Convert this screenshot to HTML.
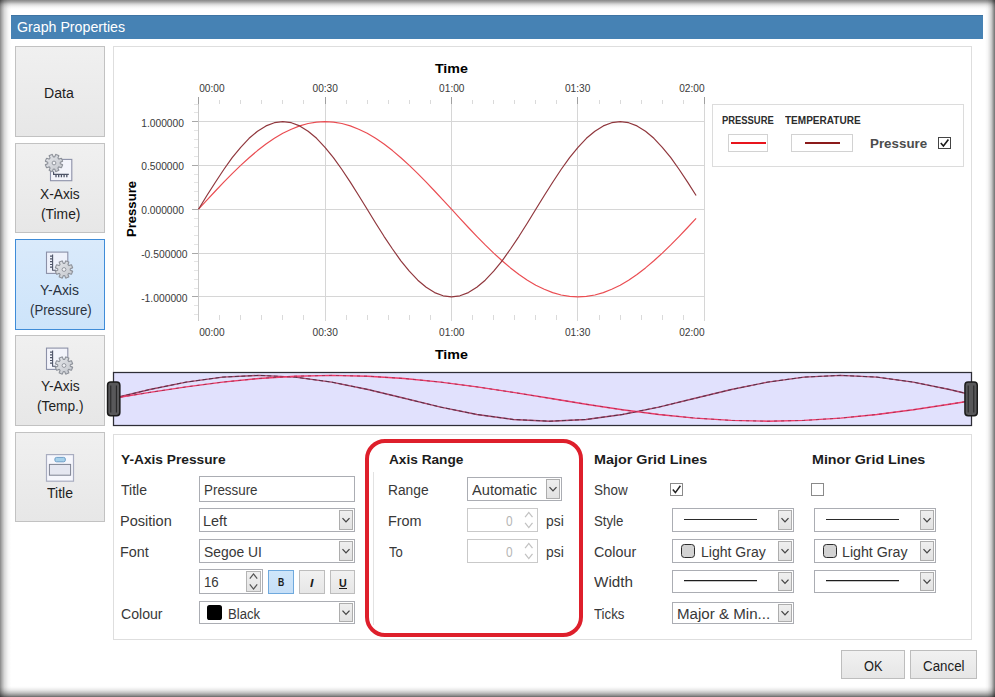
<!DOCTYPE html>
<html><head><meta charset="utf-8"><title>Graph Properties</title>
<style>
html,body{margin:0;padding:0;}
body{width:995px;height:697px;position:relative;overflow:hidden;background:#fff;font-family:"Liberation Sans",sans-serif;font-size:14px;color:#383838;}
.abs{position:absolute;}
.sh{position:absolute;pointer-events:none;z-index:50;}
.t{position:absolute;white-space:nowrap;transform-origin:0 50%;z-index:10;}
#titlebar{position:absolute;left:11px;top:15px;width:972px;height:24px;background:#4682b4;border-top:1px solid #3f74a3;box-sizing:border-box;}
.sbtn{position:absolute;left:15px;width:90px;height:90px;box-sizing:border-box;border:1px solid #c2c2c2;background:linear-gradient(#f0f0f0,#e7e7e7);}
.sbtn.sel{background:linear-gradient(#daeafb,#cde4fa);border-color:#3f8cd8;}
.panel{position:absolute;border:1px solid #dedede;background:#fff;box-sizing:border-box;}
.box{position:absolute;border:1px solid #abadb3;background:#fff;box-sizing:border-box;}
.dd{position:absolute;border:1px solid #adadad;background:linear-gradient(#efefef,#e2e2e2);box-sizing:border-box;}
.spb{position:absolute;border:1px solid #b4b4b4;background:linear-gradient(#f0f0f0,#e3e3e3);box-sizing:border-box;}
.btn{position:absolute;box-sizing:border-box;border:1px solid #bdbdbd;background:linear-gradient(#f1f1f1,#e6e6e6);}
.cb{position:absolute;width:13px;height:13px;box-sizing:border-box;border:1px solid #8a8a8a;background:#fff;}
.ln{position:absolute;height:1px;background:#2a2a2a;}
.sw{position:absolute;box-sizing:border-box;width:14.4px;height:14.4px;border-radius:3.4px;background:#d3d3d3;border:1.2px solid #2c2c2c;}
</style></head><body>
<div id="titlebar"></div>

<!-- sidebar -->
<div class="sbtn" style="top:46px;height:91px"></div>
<div class="sbtn" style="top:143px"></div>
<div class="sbtn sel" style="top:239px;height:91px"></div>
<div class="sbtn" style="top:335px;height:91px"></div>
<div class="sbtn" style="top:432px"></div>
<svg class="abs" style="left:0;top:0" width="110" height="530">
  <defs><linearGradient id="gg" x1="0" y1="0" x2="1" y2="1"><stop offset="0" stop-color="#e4e6ea"/><stop offset="1" stop-color="#c4c7cd"/></linearGradient></defs>
  <rect x="50.5" y="159.4" width="21.3" height="21.3" fill="#f3f4fb" stroke="#8c91a8" stroke-width="1.1"/>
  <path d="M53.6,171.5 V174.4 H68.8" fill="none" stroke="#4e5468" stroke-width="1.2"/>
  <path d="M56,175v2.2M58.7,175v2.2M61.4,175v2.2M64.1,175v2.2M66.8,175v2.2" stroke="#4e5468" stroke-width="1.3"/>
  <path d="M54.85,156.66 L55.36,155.22 Q55.78,154.07 56.12,154.46 L58.54,155.46 Q59.06,155.43 58.54,156.54 L57.88,157.91 Q58.24,158.76 59.09,159.12 L60.46,158.46 Q61.57,157.94 61.54,158.46 L62.54,160.88 Q62.93,161.22 61.78,161.64 L60.34,162.15 Q60.00,163.00 60.34,163.85 L61.78,164.36 Q62.93,164.78 62.54,165.12 L61.54,167.54 Q61.57,168.06 60.46,167.54 L59.09,166.88 Q58.24,167.24 57.88,168.09 L58.54,169.46 Q59.06,170.57 58.54,170.54 L56.12,171.54 Q55.78,171.93 55.36,170.78 L54.85,169.34 Q54.00,169.00 53.15,169.34 L52.64,170.78 Q52.22,171.93 51.88,171.54 L49.46,170.54 Q48.94,170.57 49.46,169.46 L50.12,168.09 Q49.76,167.24 48.91,166.88 L47.54,167.54 Q46.43,168.06 46.46,167.54 L45.46,165.12 Q45.07,164.78 46.22,164.36 L47.66,163.85 Q48.00,163.00 47.66,162.15 L46.22,161.64 Q45.07,161.22 45.46,160.88 L46.46,158.46 Q46.43,157.94 47.54,158.46 L48.91,159.12 Q49.76,158.76 50.12,157.91 L49.46,156.54 Q48.94,155.43 49.46,155.46 L51.88,154.46 Q52.22,154.07 52.64,155.22 L53.15,156.66 Q54.00,157.00 54.85,156.66 Z" fill="url(#gg)" stroke="#8e929a" stroke-width="1.1" stroke-linejoin="round"/><circle cx="54" cy="163" r="1.9" fill="#f2f3f6" stroke="#92969e" stroke-width="1"/>
  <rect x="46.5" y="252.1" width="21.3" height="21.3" fill="#eef1fb" stroke="#8c91a8" stroke-width="1.1"/><path d="M52.6,254.5 V270.3 H56" fill="none" stroke="#4e5468" stroke-width="1.1"/><path d="M50,256.2h2.4M50,258.9h2.4M50,261.7h2.4M50,264.5h2.4M50,267.2h2.4" stroke="#4e5468" stroke-width="1.2"/><path d="M64.85,263.16 L65.36,261.72 Q65.78,260.57 66.12,260.96 L68.54,261.96 Q69.06,261.93 68.54,263.04 L67.88,264.41 Q68.24,265.26 69.09,265.62 L70.46,264.96 Q71.57,264.44 71.54,264.96 L72.54,267.38 Q72.93,267.72 71.78,268.14 L70.34,268.65 Q70.00,269.50 70.34,270.35 L71.78,270.86 Q72.93,271.28 72.54,271.62 L71.54,274.04 Q71.57,274.56 70.46,274.04 L69.09,273.38 Q68.24,273.74 67.88,274.59 L68.54,275.96 Q69.06,277.07 68.54,277.04 L66.12,278.04 Q65.78,278.43 65.36,277.28 L64.85,275.84 Q64.00,275.50 63.15,275.84 L62.64,277.28 Q62.22,278.43 61.88,278.04 L59.46,277.04 Q58.94,277.07 59.46,275.96 L60.12,274.59 Q59.76,273.74 58.91,273.38 L57.54,274.04 Q56.43,274.56 56.46,274.04 L55.46,271.62 Q55.07,271.28 56.22,270.86 L57.66,270.35 Q58.00,269.50 57.66,268.65 L56.22,268.14 Q55.07,267.72 55.46,267.38 L56.46,264.96 Q56.43,264.44 57.54,264.96 L58.91,265.62 Q59.76,265.26 60.12,264.41 L59.46,263.04 Q58.94,261.93 59.46,261.96 L61.88,260.96 Q62.22,260.57 62.64,261.72 L63.15,263.16 Q64.00,263.50 64.85,263.16 Z" fill="url(#gg)" stroke="#8e929a" stroke-width="1.1" stroke-linejoin="round"/><circle cx="64" cy="269.5" r="1.9" fill="#f2f3f6" stroke="#92969e" stroke-width="1"/>
  <rect x="46.5" y="348.09999999999997" width="21.3" height="21.3" fill="#f3f4fb" stroke="#8c91a8" stroke-width="1.1"/><path d="M52.6,350.5 V366.29999999999995 H56" fill="none" stroke="#4e5468" stroke-width="1.1"/><path d="M50,352.2h2.4M50,354.9h2.4M50,357.7h2.4M50,360.5h2.4M50,363.2h2.4" stroke="#4e5468" stroke-width="1.2"/><path d="M64.85,359.16 L65.36,357.72 Q65.78,356.57 66.12,356.96 L68.54,357.96 Q69.06,357.93 68.54,359.04 L67.88,360.41 Q68.24,361.26 69.09,361.62 L70.46,360.96 Q71.57,360.44 71.54,360.96 L72.54,363.38 Q72.93,363.72 71.78,364.14 L70.34,364.65 Q70.00,365.50 70.34,366.35 L71.78,366.86 Q72.93,367.28 72.54,367.62 L71.54,370.04 Q71.57,370.56 70.46,370.04 L69.09,369.38 Q68.24,369.74 67.88,370.59 L68.54,371.96 Q69.06,373.07 68.54,373.04 L66.12,374.04 Q65.78,374.43 65.36,373.28 L64.85,371.84 Q64.00,371.50 63.15,371.84 L62.64,373.28 Q62.22,374.43 61.88,374.04 L59.46,373.04 Q58.94,373.07 59.46,371.96 L60.12,370.59 Q59.76,369.74 58.91,369.38 L57.54,370.04 Q56.43,370.56 56.46,370.04 L55.46,367.62 Q55.07,367.28 56.22,366.86 L57.66,366.35 Q58.00,365.50 57.66,364.65 L56.22,364.14 Q55.07,363.72 55.46,363.38 L56.46,360.96 Q56.43,360.44 57.54,360.96 L58.91,361.62 Q59.76,361.26 60.12,360.41 L59.46,359.04 Q58.94,357.93 59.46,357.96 L61.88,356.96 Q62.22,356.57 62.64,357.72 L63.15,359.16 Q64.00,359.50 64.85,359.16 Z" fill="url(#gg)" stroke="#8e929a" stroke-width="1.1" stroke-linejoin="round"/><circle cx="64" cy="365.5" r="1.9" fill="#f2f3f6" stroke="#92969e" stroke-width="1"/>
  <rect x="46.5" y="454.6" width="27" height="26.6" fill="#f6f7fd" stroke="#a9adc0" stroke-width="1.2"/>
  <rect x="54.9" y="457.4" width="10.4" height="4.4" rx="1.6" fill="#a6d0ea" stroke="#6f9fc8" stroke-width="1"/>
  <rect x="49.4" y="464.4" width="21.2" height="10.8" fill="#e5e7f1" stroke="#7e8292" stroke-width="1"/>
</svg>

<!-- chart panel -->
<div class="panel" style="left:113px;top:46px;width:859px;height:379px"></div>
<svg class="abs" style="left:0;top:0" width="995" height="440">
<g shape-rendering="crispEdges">
<line x1="199" y1="121.5" x2="705" y2="121.5" stroke="#d6d6d6"/>
<line x1="192" y1="121.5" x2="198" y2="121.5" stroke="#a8a8a8"/>
<line x1="199" y1="165.5" x2="705" y2="165.5" stroke="#d6d6d6"/>
<line x1="192" y1="165.5" x2="198" y2="165.5" stroke="#a8a8a8"/>
<line x1="199" y1="209.5" x2="705" y2="209.5" stroke="#d6d6d6"/>
<line x1="192" y1="209.5" x2="198" y2="209.5" stroke="#a8a8a8"/>
<line x1="199" y1="253.5" x2="705" y2="253.5" stroke="#d6d6d6"/>
<line x1="192" y1="253.5" x2="198" y2="253.5" stroke="#a8a8a8"/>
<line x1="199" y1="296.5" x2="705" y2="296.5" stroke="#d6d6d6"/>
<line x1="192" y1="296.5" x2="198" y2="296.5" stroke="#a8a8a8"/>
<line x1="198.5" y1="104" x2="198.5" y2="321" stroke="#cbcbcb"/>
<line x1="198.5" y1="97" x2="198.5" y2="104" stroke="#a0a0a0"/>
<line x1="325.5" y1="104" x2="325.5" y2="321" stroke="#d6d6d6"/>
<line x1="325.5" y1="97" x2="325.5" y2="104" stroke="#a0a0a0"/>
<line x1="451.5" y1="104" x2="451.5" y2="321" stroke="#d6d6d6"/>
<line x1="451.5" y1="97" x2="451.5" y2="104" stroke="#a0a0a0"/>
<line x1="577.5" y1="104" x2="577.5" y2="321" stroke="#d6d6d6"/>
<line x1="577.5" y1="97" x2="577.5" y2="104" stroke="#a0a0a0"/>
<line x1="704.5" y1="104" x2="704.5" y2="321" stroke="#d6d6d6"/>
<line x1="704.5" y1="97" x2="704.5" y2="104" stroke="#a0a0a0"/>
<line x1="219.5" y1="100" x2="219.5" y2="104" stroke="#dadada"/>
<line x1="219.5" y1="315" x2="219.5" y2="320" stroke="#dadada"/>
<line x1="240.5" y1="100" x2="240.5" y2="104" stroke="#dadada"/>
<line x1="240.5" y1="315" x2="240.5" y2="320" stroke="#dadada"/>
<line x1="261.5" y1="100" x2="261.5" y2="104" stroke="#dadada"/>
<line x1="261.5" y1="315" x2="261.5" y2="320" stroke="#dadada"/>
<line x1="282.5" y1="100" x2="282.5" y2="104" stroke="#dadada"/>
<line x1="282.5" y1="315" x2="282.5" y2="320" stroke="#dadada"/>
<line x1="303.5" y1="100" x2="303.5" y2="104" stroke="#dadada"/>
<line x1="303.5" y1="315" x2="303.5" y2="320" stroke="#dadada"/>
<line x1="346.5" y1="100" x2="346.5" y2="104" stroke="#dadada"/>
<line x1="346.5" y1="315" x2="346.5" y2="320" stroke="#dadada"/>
<line x1="367.5" y1="100" x2="367.5" y2="104" stroke="#dadada"/>
<line x1="367.5" y1="315" x2="367.5" y2="320" stroke="#dadada"/>
<line x1="388.5" y1="100" x2="388.5" y2="104" stroke="#dadada"/>
<line x1="388.5" y1="315" x2="388.5" y2="320" stroke="#dadada"/>
<line x1="409.5" y1="100" x2="409.5" y2="104" stroke="#dadada"/>
<line x1="409.5" y1="315" x2="409.5" y2="320" stroke="#dadada"/>
<line x1="430.5" y1="100" x2="430.5" y2="104" stroke="#dadada"/>
<line x1="430.5" y1="315" x2="430.5" y2="320" stroke="#dadada"/>
<line x1="472.5" y1="100" x2="472.5" y2="104" stroke="#dadada"/>
<line x1="472.5" y1="315" x2="472.5" y2="320" stroke="#dadada"/>
<line x1="493.5" y1="100" x2="493.5" y2="104" stroke="#dadada"/>
<line x1="493.5" y1="315" x2="493.5" y2="320" stroke="#dadada"/>
<line x1="514.5" y1="100" x2="514.5" y2="104" stroke="#dadada"/>
<line x1="514.5" y1="315" x2="514.5" y2="320" stroke="#dadada"/>
<line x1="535.5" y1="100" x2="535.5" y2="104" stroke="#dadada"/>
<line x1="535.5" y1="315" x2="535.5" y2="320" stroke="#dadada"/>
<line x1="556.5" y1="100" x2="556.5" y2="104" stroke="#dadada"/>
<line x1="556.5" y1="315" x2="556.5" y2="320" stroke="#dadada"/>
<line x1="599.5" y1="100" x2="599.5" y2="104" stroke="#dadada"/>
<line x1="599.5" y1="315" x2="599.5" y2="320" stroke="#dadada"/>
<line x1="620.5" y1="100" x2="620.5" y2="104" stroke="#dadada"/>
<line x1="620.5" y1="315" x2="620.5" y2="320" stroke="#dadada"/>
<line x1="641.5" y1="100" x2="641.5" y2="104" stroke="#dadada"/>
<line x1="641.5" y1="315" x2="641.5" y2="320" stroke="#dadada"/>
<line x1="662.5" y1="100" x2="662.5" y2="104" stroke="#dadada"/>
<line x1="662.5" y1="315" x2="662.5" y2="320" stroke="#dadada"/>
<line x1="683.5" y1="100" x2="683.5" y2="104" stroke="#dadada"/>
<line x1="683.5" y1="315" x2="683.5" y2="320" stroke="#dadada"/>
<line x1="194" y1="314.5" x2="198" y2="314.5" stroke="#e4e4e4"/>
<line x1="194" y1="305.5" x2="198" y2="305.5" stroke="#e4e4e4"/>
<line x1="194" y1="288.5" x2="198" y2="288.5" stroke="#e4e4e4"/>
<line x1="194" y1="279.5" x2="198" y2="279.5" stroke="#e4e4e4"/>
<line x1="194" y1="270.5" x2="198" y2="270.5" stroke="#e4e4e4"/>
<line x1="194" y1="261.5" x2="198" y2="261.5" stroke="#e4e4e4"/>
<line x1="194" y1="244.5" x2="198" y2="244.5" stroke="#e4e4e4"/>
<line x1="194" y1="235.5" x2="198" y2="235.5" stroke="#e4e4e4"/>
<line x1="194" y1="226.5" x2="198" y2="226.5" stroke="#e4e4e4"/>
<line x1="194" y1="218.5" x2="198" y2="218.5" stroke="#e4e4e4"/>
<line x1="194" y1="200.5" x2="198" y2="200.5" stroke="#e4e4e4"/>
<line x1="194" y1="191.5" x2="198" y2="191.5" stroke="#e4e4e4"/>
<line x1="194" y1="182.5" x2="198" y2="182.5" stroke="#e4e4e4"/>
<line x1="194" y1="174.5" x2="198" y2="174.5" stroke="#e4e4e4"/>
<line x1="194" y1="156.5" x2="198" y2="156.5" stroke="#e4e4e4"/>
<line x1="194" y1="147.5" x2="198" y2="147.5" stroke="#e4e4e4"/>
<line x1="194" y1="139.5" x2="198" y2="139.5" stroke="#e4e4e4"/>
<line x1="194" y1="130.5" x2="198" y2="130.5" stroke="#e4e4e4"/>
<line x1="194" y1="112.5" x2="198" y2="112.5" stroke="#e4e4e4"/>
<line x1="194" y1="104.5" x2="198" y2="104.5" stroke="#e4e4e4"/>
</g>
<polyline points="198.5,209.2 206.9,200.1 215.4,191.0 223.8,182.2 232.2,173.6 240.7,165.4 249.1,157.7 257.5,150.6 266.0,144.1 274.4,138.3 282.8,133.3 291.3,129.2 299.7,125.9 308.1,123.5 316.6,122.1 325.0,121.6 333.4,122.1 341.9,123.5 350.3,125.9 358.7,129.2 367.2,133.3 375.6,138.3 384.0,144.1 392.5,150.6 400.9,157.7 409.3,165.4 417.8,173.6 426.2,182.2 434.6,191.0 443.1,200.1 451.5,209.2 459.9,218.4 468.4,227.5 476.8,236.3 485.2,244.9 493.7,253.1 502.1,260.8 510.5,267.9 519.0,274.4 527.4,280.2 535.8,285.2 544.3,289.3 552.7,292.6 561.1,295.0 569.6,296.4 578.0,296.9 586.4,296.4 594.9,295.0 603.3,292.6 611.7,289.3 620.2,285.2 628.6,280.2 637.0,274.4 645.5,267.9 653.9,260.8 662.3,253.1 670.8,244.9 679.2,236.3 687.6,227.5 696.1,218.4" fill="none" stroke="#ea4d52" stroke-width="1.2" stroke-linejoin="round"/>
<polyline points="198.5,209.2 206.9,195.5 215.4,182.2 223.8,169.5 232.2,157.7 240.7,147.3 249.1,138.3 257.5,131.2 266.0,125.9 274.4,122.7 282.8,121.6 291.3,122.7 299.7,125.9 308.1,131.2 316.6,138.3 325.0,147.3 333.4,157.7 341.9,169.5 350.3,182.2 358.7,195.5 367.2,209.2 375.6,223.0 384.0,236.3 392.5,249.0 400.9,260.8 409.3,271.2 417.8,280.2 426.2,287.3 434.6,292.6 443.1,295.8 451.5,296.9 459.9,295.8 468.4,292.6 476.8,287.3 485.2,280.2 493.7,271.2 502.1,260.8 510.5,249.0 519.0,236.3 527.4,223.0 535.8,209.3 544.3,195.5 552.7,182.2 561.1,169.5 569.6,157.7 578.0,147.3 586.4,138.3 594.9,131.2 603.3,125.9 611.7,122.7 620.2,121.6 628.6,122.7 637.0,125.9 645.5,131.2 653.9,138.3 662.3,147.3 670.8,157.7 679.2,169.5 687.6,182.2 696.1,195.5" fill="none" stroke="#90373d" stroke-width="1.2" stroke-linejoin="round"/>
<text x="199.2" y="91.7" text-anchor="start" font-size="10.6" fill="#3a3a3a" textLength="25.4" lengthAdjust="spacingAndGlyphs" font-family="Liberation Sans, sans-serif">00:00</text>
<text x="199.2" y="335.8" text-anchor="start" font-size="10.6" fill="#3a3a3a" textLength="25.4" lengthAdjust="spacingAndGlyphs" font-family="Liberation Sans, sans-serif">00:00</text>
<text x="325.2" y="91.7" text-anchor="middle" font-size="10.6" fill="#3a3a3a" textLength="25.4" lengthAdjust="spacingAndGlyphs" font-family="Liberation Sans, sans-serif">00:30</text>
<text x="325.2" y="335.8" text-anchor="middle" font-size="10.6" fill="#3a3a3a" textLength="25.4" lengthAdjust="spacingAndGlyphs" font-family="Liberation Sans, sans-serif">00:30</text>
<text x="451.8" y="91.7" text-anchor="middle" font-size="10.6" fill="#3a3a3a" textLength="25.4" lengthAdjust="spacingAndGlyphs" font-family="Liberation Sans, sans-serif">01:00</text>
<text x="451.8" y="335.8" text-anchor="middle" font-size="10.6" fill="#3a3a3a" textLength="25.4" lengthAdjust="spacingAndGlyphs" font-family="Liberation Sans, sans-serif">01:00</text>
<text x="577.6" y="91.7" text-anchor="middle" font-size="10.6" fill="#3a3a3a" textLength="25.4" lengthAdjust="spacingAndGlyphs" font-family="Liberation Sans, sans-serif">01:30</text>
<text x="577.6" y="335.8" text-anchor="middle" font-size="10.6" fill="#3a3a3a" textLength="25.4" lengthAdjust="spacingAndGlyphs" font-family="Liberation Sans, sans-serif">01:30</text>
<text x="704.6" y="91.7" text-anchor="end" font-size="10.6" fill="#3a3a3a" textLength="25.4" lengthAdjust="spacingAndGlyphs" font-family="Liberation Sans, sans-serif">02:00</text>
<text x="704.6" y="335.8" text-anchor="end" font-size="10.6" fill="#3a3a3a" textLength="25.4" lengthAdjust="spacingAndGlyphs" font-family="Liberation Sans, sans-serif">02:00</text>
<text x="141.2" y="126.5" font-size="10.6" fill="#3a3a3a" textLength="42.8" lengthAdjust="spacingAndGlyphs" font-family="Liberation Sans, sans-serif">1.000000</text>
<text x="141.2" y="170.3" font-size="10.6" fill="#3a3a3a" textLength="42.8" lengthAdjust="spacingAndGlyphs" font-family="Liberation Sans, sans-serif">0.500000</text>
<text x="141.2" y="214.2" font-size="10.6" fill="#3a3a3a" textLength="42.8" lengthAdjust="spacingAndGlyphs" font-family="Liberation Sans, sans-serif">0.000000</text>
<text x="141.2" y="258.0" font-size="10.6" fill="#3a3a3a" textLength="46.4" lengthAdjust="spacingAndGlyphs" font-family="Liberation Sans, sans-serif">-0.500000</text>
<text x="141.2" y="301.8" font-size="10.6" fill="#3a3a3a" textLength="46.4" lengthAdjust="spacingAndGlyphs" font-family="Liberation Sans, sans-serif">-1.000000</text>
<text x="451.4" y="73.2" text-anchor="middle" font-size="13.4" font-weight="bold" fill="#000" textLength="33" lengthAdjust="spacingAndGlyphs" font-family="Liberation Sans, sans-serif">Time</text>
<text x="451.4" y="358.6" text-anchor="middle" font-size="13.4" font-weight="bold" fill="#000" textLength="33" lengthAdjust="spacingAndGlyphs" font-family="Liberation Sans, sans-serif">Time</text>
<text transform="translate(136.4,209) rotate(-90)" text-anchor="middle" font-size="13.4" font-weight="bold" fill="#000" textLength="56" lengthAdjust="spacingAndGlyphs" font-family="Liberation Sans, sans-serif">Pressure</text>
<rect x="113.5" y="372.5" width="858" height="53" fill="#e1e1fd" stroke="#2e2e36" stroke-width="1.25"/>
<polyline points="113.5,398.3 149.8,389.5 186.2,382.1 222.6,377.1 258.9,375.4 295.2,377.1 331.6,382.1 367.9,389.5 404.3,398.3 440.6,407.1 477.0,414.5 513.3,419.5 549.7,421.2 586.0,419.5 622.4,414.5 658.8,407.1 695.1,398.3 731.4,389.5 767.8,382.1 804.1,377.1 840.5,375.4 876.8,377.1 913.2,382.1 949.5,389.5 971.4,394.7" fill="none" stroke="#a84468" stroke-width="1.4"/>
<polyline points="113.5,398.3 149.8,389.5 186.2,382.1 222.6,377.1 258.9,375.4 295.2,377.1 331.6,382.1 367.9,389.5 404.3,398.3 440.6,407.1 477.0,414.5 513.3,419.5 549.7,421.2 586.0,419.5 622.4,414.5 658.8,407.1 695.1,398.3 731.4,389.5 767.8,382.1 804.1,377.1 840.5,375.4 876.8,377.1 913.2,382.1 949.5,389.5 971.4,394.7" fill="none" stroke="#553045" stroke-width="1.0" stroke-dasharray="4 2.5"/>
<polyline points="113.5,398.3 149.8,392.4 186.2,386.9 222.6,382.1 258.9,378.5 295.2,376.2 331.6,375.4 367.9,376.2 404.3,378.5 440.6,382.1 477.0,386.9 513.3,392.4 549.7,398.3 586.0,404.2 622.4,409.8 658.8,414.5 695.1,418.1 731.4,420.4 767.8,421.2 804.1,420.4 840.5,418.1 876.8,414.5 913.2,409.8 949.5,404.2 971.4,400.7" fill="none" stroke="#ee3a68" stroke-width="1.4"/>
<polyline points="113.5,398.3 149.8,392.4 186.2,386.9 222.6,382.1 258.9,378.5 295.2,376.2 331.6,375.4 367.9,376.2 404.3,378.5 440.6,382.1 477.0,386.9 513.3,392.4 549.7,398.3 586.0,404.2 622.4,409.8 658.8,414.5 695.1,418.1 731.4,420.4 767.8,421.2 804.1,420.4 840.5,418.1 876.8,414.5 913.2,409.8 949.5,404.2 971.4,400.7" fill="none" stroke="#a03050" stroke-width="0.9" stroke-dasharray="3 4"/>
<rect x="107.55" y="382.1" width="12.3" height="33.6" rx="3.2" fill="#58585a" stroke="#1a1a1a" stroke-width="1.5"/>
<line x1="110.8" y1="385.5" x2="110.8" y2="412.5" stroke="#1e1e1e" stroke-width="0.9"/>
<line x1="116.39999999999999" y1="385.5" x2="116.39999999999999" y2="412.5" stroke="#1e1e1e" stroke-width="0.9"/>
<rect x="964.95" y="382.1" width="12.3" height="33.6" rx="3.2" fill="#58585a" stroke="#1a1a1a" stroke-width="1.5"/>
<line x1="968.2" y1="385.5" x2="968.2" y2="412.5" stroke="#1e1e1e" stroke-width="0.9"/>
<line x1="973.8000000000001" y1="385.5" x2="973.8000000000001" y2="412.5" stroke="#1e1e1e" stroke-width="0.9"/>
</svg>
<!-- legend -->
<div class="abs" style="left:712px;top:104px;width:250px;height:61px;border:1px solid #dcdcdc;background:#fff"></div>
<div class="abs" style="left:728px;top:134px;width:38px;height:16px;border:1px solid #d2d2d2;background:#fff"><div class="abs" style="left:2px;top:6.6px;width:34.5px;height:2px;background:#e8141c"></div></div>
<div class="abs" style="left:791px;top:134px;width:60px;height:16px;border:1px solid #d2d2d2;background:#fff"><div class="abs" style="left:13px;top:6.6px;width:34.5px;height:2px;background:#8b1a1a"></div></div>
<div class="cb" style="left:938px;top:137px;height:12px;border-color:#444"><svg class="abs" style="left:0;top:0" width="11" height="10"><path d="M1.8,5 L4.4,8 L9.4,1.4" fill="none" stroke="#1a1a1a" stroke-width="1.6"/></svg></div>

<!-- bottom panel -->
<div class="panel" style="left:113px;top:434px;width:859px;height:206px"></div>
<div class="abs" style="left:373px;top:472px;width:1px;height:153px;background:#e2e2e2"></div>

<div class="box" style="left:199px;top:476px;width:156px;height:26px"></div>
<div class="box" style="left:199px;top:508px;width:156px;height:24px"></div><div class="dd" style="left:339px;top:510px;width:14px;height:20px"><svg width="14" height="20" style="position:absolute;left:-1px;top:-1px"><path d="M3.5,8.1 L7.0,11.9 L10.5,8.1" fill="none" stroke="#444" stroke-width="1.3"/></svg></div>
<div class="box" style="left:199px;top:539px;width:156px;height:24px"></div><div class="dd" style="left:339px;top:541px;width:14px;height:20px"><svg width="14" height="20" style="position:absolute;left:-1px;top:-1px"><path d="M3.5,8.1 L7.0,11.9 L10.5,8.1" fill="none" stroke="#444" stroke-width="1.3"/></svg></div>
<div class="box" style="left:199px;top:569px;width:64px;height:25px"></div><div class="spb" style="left:246px;top:571px;width:15px;height:21px"></div><svg class="abs" style="left:0;top:0;overflow:visible" width="1" height="1"><path d="M249.8,578.6999999999999 L253.5,573.9 L257.2,578.6999999999999 M249.8,584.3000000000001 L253.5,589.1 L257.2,584.3000000000001" fill="none" stroke="#555" stroke-width="1.25"/></svg>
<div class="btn" style="left:268px;top:570px;width:26px;height:24px;background:linear-gradient(#cfe6fa,#c6dff7);border-color:#6fa9dd"></div>
<div class="btn" style="left:299px;top:570px;width:26px;height:24px"></div>
<div class="btn" style="left:330px;top:570px;width:25px;height:24px"></div>
<div class="abs" style="left:338.8px;top:587.6px;width:8.2px;height:1.1px;background:#1c1c1c;z-index:11"></div>
<div class="box" style="left:199px;top:601px;width:156px;height:23px"></div><div class="dd" style="left:339px;top:603px;width:14px;height:19px"><svg width="14" height="19" style="position:absolute;left:-1px;top:-1px"><path d="M3.5,7.6 L7.0,11.4 L10.5,7.6" fill="none" stroke="#444" stroke-width="1.3"/></svg></div>
<div class="abs" style="left:207px;top:605.2px;width:15px;height:14.6px;border-radius:2.6px;background:#000"></div>
<div class="abs" style="left:365.3px;top:438.6px;width:210.1px;height:190.3px;border:4.3px solid #de1f2b;border-radius:20px;z-index:5"></div>
<div class="box" style="left:467px;top:477px;width:95px;height:24px"></div><div class="dd" style="left:546px;top:479px;width:14px;height:20px"><svg width="14" height="20" style="position:absolute;left:-1px;top:-1px"><path d="M3.5,8.1 L7.0,11.9 L10.5,8.1" fill="none" stroke="#444" stroke-width="1.3"/></svg></div>
<div class="box" style="left:467px;top:508px;width:71px;height:24px;border-color:#c9c9c9"></div><svg class="abs" style="left:0;top:0;overflow:visible" width="1" height="1"><path d="M525.0999999999999,517.1999999999999 L528.8,512.4 L532.5,517.1999999999999 M525.0999999999999,522.8000000000001 L528.8,527.6 L532.5,522.8000000000001" fill="none" stroke="#c2c2c2" stroke-width="1.25"/></svg>
<div class="box" style="left:467px;top:539px;width:71px;height:24px;border-color:#c9c9c9"></div><svg class="abs" style="left:0;top:0;overflow:visible" width="1" height="1"><path d="M525.0999999999999,548.1999999999999 L528.8,543.4 L532.5,548.1999999999999 M525.0999999999999,553.8000000000001 L528.8,558.6 L532.5,553.8000000000001" fill="none" stroke="#c2c2c2" stroke-width="1.25"/></svg>
<div class="cb" style="left:670px;top:482.5px"><svg class="abs" style="left:0;top:0" width="11" height="11"><path d="M1.8,5.6 L4.4,8.6 L9.4,1.8" fill="none" stroke="#222" stroke-width="1.5"/></svg></div>
<div class="cb" style="left:811px;top:482.5px"></div>
<div class="box" style="left:672px;top:508px;width:122px;height:24px"></div><div class="dd" style="left:778px;top:510px;width:14px;height:20px"><svg width="14" height="20" style="position:absolute;left:-1px;top:-1px"><path d="M3.5,8.1 L7.0,11.9 L10.5,8.1" fill="none" stroke="#444" stroke-width="1.3"/></svg></div>
<div class="ln" style="left:684px;top:519px;width:73px"></div>
<div class="box" style="left:672px;top:539px;width:122px;height:24px"></div><div class="dd" style="left:778px;top:541px;width:14px;height:20px"><svg width="14" height="20" style="position:absolute;left:-1px;top:-1px"><path d="M3.5,8.1 L7.0,11.9 L10.5,8.1" fill="none" stroke="#444" stroke-width="1.3"/></svg></div>
<div class="sw" style="left:680.5px;top:543.5px"></div>
<div class="box" style="left:672px;top:570px;width:122px;height:23px"></div><div class="dd" style="left:778px;top:572px;width:14px;height:19px"><svg width="14" height="19" style="position:absolute;left:-1px;top:-1px"><path d="M3.5,7.6 L7.0,11.4 L10.5,7.6" fill="none" stroke="#444" stroke-width="1.3"/></svg></div>
<div class="ln" style="left:684px;top:580px;width:73px;background:#1e1e1e;box-shadow:0 1px 0 rgba(0,0,0,.22)"></div>
<div class="box" style="left:814px;top:508px;width:122px;height:24px"></div><div class="dd" style="left:920px;top:510px;width:14px;height:20px"><svg width="14" height="20" style="position:absolute;left:-1px;top:-1px"><path d="M3.5,8.1 L7.0,11.9 L10.5,8.1" fill="none" stroke="#444" stroke-width="1.3"/></svg></div>
<div class="ln" style="left:826px;top:519px;width:73px"></div>
<div class="box" style="left:814px;top:539px;width:122px;height:24px"></div><div class="dd" style="left:920px;top:541px;width:14px;height:20px"><svg width="14" height="20" style="position:absolute;left:-1px;top:-1px"><path d="M3.5,8.1 L7.0,11.9 L10.5,8.1" fill="none" stroke="#444" stroke-width="1.3"/></svg></div>
<div class="sw" style="left:822.5px;top:543.5px"></div>
<div class="box" style="left:814px;top:570px;width:122px;height:23px"></div><div class="dd" style="left:920px;top:572px;width:14px;height:19px"><svg width="14" height="19" style="position:absolute;left:-1px;top:-1px"><path d="M3.5,7.6 L7.0,11.4 L10.5,7.6" fill="none" stroke="#444" stroke-width="1.3"/></svg></div>
<div class="ln" style="left:826px;top:580px;width:73px;background:#1e1e1e;box-shadow:0 1px 0 rgba(0,0,0,.22)"></div>
<div class="box" style="left:672px;top:602px;width:122px;height:22px"></div><div class="dd" style="left:778px;top:604px;width:14px;height:18px"><svg width="14" height="18" style="position:absolute;left:-1px;top:-1px"><path d="M3.5,7.1 L7.0,10.9 L10.5,7.1" fill="none" stroke="#444" stroke-width="1.3"/></svg></div>
<div class="btn" style="left:841px;top:650px;width:64px;height:29px"></div>
<div class="btn" style="left:910px;top:650px;width:67px;height:29px"></div>
<!-- text -->
<div class="t" style="left:16.60px;top:19.42px;font-size:13.8px;line-height:18px;color:#fff;transform:scaleX(1.0289)">Graph Properties</div>
<div class="t" style="left:44.49px;top:83.75px;font-size:14px;line-height:18px;color:#1e1e1e;transform:scaleX(1.0074)">Data</div>
<div class="t" style="left:39.90px;top:185.15px;font-size:14px;line-height:18px;color:#1e1e1e;transform:scaleX(0.9815)">X-Axis</div>
<div class="t" style="left:40.80px;top:204.85px;font-size:14px;line-height:18px;color:#1e1e1e;transform:scaleX(0.9885)">(Time)</div>
<div class="t" style="left:40.30px;top:281.15px;font-size:14px;line-height:18px;color:#2a3240;transform:scaleX(0.9933)">Y-Axis</div>
<div class="t" style="left:29.50px;top:301.05px;font-size:14px;line-height:18px;color:#2a3240;transform:scaleX(0.9431)">(Pressure)</div>
<div class="t" style="left:40.60px;top:377.45px;font-size:14px;line-height:18px;color:#1e1e1e;transform:scaleX(0.9907)">Y-Axis</div>
<div class="t" style="left:37.20px;top:397.35px;font-size:14px;line-height:18px;color:#1e1e1e;transform:scaleX(0.9789)">(Temp.)</div>
<div class="t" style="left:47.10px;top:483.85px;font-size:14px;line-height:18px;color:#1e1e1e;transform:scaleX(1.0022)">Title</div>
<div class="t" style="left:721.90px;top:112.18px;font-size:11.6px;line-height:15px;color:#2c2c2c;transform:scaleX(0.8103);font-weight:bold">PRESSURE</div>
<div class="t" style="left:784.90px;top:112.18px;font-size:11.6px;line-height:15px;color:#2c2c2c;transform:scaleX(0.8648);font-weight:bold">TEMPERATURE</div>
<div class="t" style="left:870.30px;top:135.39px;font-size:13.3px;line-height:17px;color:#4c4c4c;transform:scaleX(1.0049);font-weight:bold">Pressure</div>
<div class="t" style="left:121.00px;top:450.79px;font-size:13.6px;line-height:17px;color:#1c1c1c;transform:scaleX(1.0099);font-weight:bold">Y-Axis Pressure</div>
<div class="t" style="left:121.40px;top:480.75px;font-size:14px;line-height:18px;color:#383838;transform:scaleX(1.0022)">Title</div>
<div class="t" style="left:120.36px;top:511.65px;font-size:14px;line-height:18px;color:#383838;transform:scaleX(1.0391)">Position</div>
<div class="t" style="left:120.38px;top:542.55px;font-size:14px;line-height:18px;color:#383838;transform:scaleX(1.0249)">Font</div>
<div class="t" style="left:121.40px;top:604.55px;font-size:14px;line-height:18px;color:#383838;transform:scaleX(1.0077)">Colour</div>
<div class="t" style="left:203.54px;top:480.75px;font-size:14px;line-height:18px;color:#383838;transform:scaleX(0.9559)">Pressure</div>
<div class="t" style="left:203.47px;top:511.65px;font-size:14px;line-height:18px;color:#383838;transform:scaleX(1.0284)">Left</div>
<div class="t" style="left:203.90px;top:542.55px;font-size:14px;line-height:18px;color:#383838;transform:scaleX(0.9916)">Segoe UI</div>
<div class="t" style="left:204.15px;top:573.35px;font-size:14px;line-height:18px;color:#383838;transform:scaleX(0.9468)">16</div>
<div class="t" style="left:277.80px;top:575.49px;font-size:10.7px;line-height:14px;color:#1c1c1c;transform:scaleX(0.8125);font-weight:bold">B</div>
<div class="t" style="left:310.10px;top:575.69px;font-size:10.7px;line-height:14px;color:#1c1c1c;transform:scaleX(1.1750);font-weight:bold;font-style:italic">I</div>
<div class="t" style="left:338.90px;top:575.69px;font-size:10.7px;line-height:14px;color:#1c1c1c;transform:scaleX(1.0000);font-weight:bold">U</div>
<div class="t" style="left:227.66px;top:604.55px;font-size:14px;line-height:18px;color:#383838;transform:scaleX(0.9377)">Black</div>
<div class="t" style="left:388.90px;top:450.79px;font-size:13.6px;line-height:17px;color:#1c1c1c;transform:scaleX(1.0044);font-weight:bold">Axis Range</div>
<div class="t" style="left:387.92px;top:480.75px;font-size:14px;line-height:18px;color:#383838;transform:scaleX(0.9835)">Range</div>
<div class="t" style="left:387.87px;top:511.65px;font-size:14px;line-height:18px;color:#383838;transform:scaleX(1.0290)">From</div>
<div class="t" style="left:388.90px;top:542.55px;font-size:14px;line-height:18px;color:#383838;transform:scaleX(0.9333)">To</div>
<div class="t" style="left:472.20px;top:480.75px;font-size:14px;line-height:18px;color:#383838;transform:scaleX(1.0458)">Automatic</div>
<div class="t" style="left:506.40px;top:511.65px;font-size:14px;line-height:18px;color:#b6b6b6;transform:scaleX(0.8500)">0</div>
<div class="t" style="left:506.40px;top:542.55px;font-size:14px;line-height:18px;color:#b6b6b6;transform:scaleX(0.8500)">0</div>
<div class="t" style="left:546.20px;top:511.65px;font-size:14px;line-height:18px;color:#383838;transform:scaleX(0.9895)">psi</div>
<div class="t" style="left:546.20px;top:542.55px;font-size:14px;line-height:18px;color:#383838;transform:scaleX(0.9895)">psi</div>
<div class="t" style="left:594.30px;top:450.79px;font-size:13.6px;line-height:17px;color:#1c1c1c;transform:scaleX(1.0553);font-weight:bold">Major Grid Lines</div>
<div class="t" style="left:594.30px;top:480.75px;font-size:14px;line-height:18px;color:#383838;transform:scaleX(0.9607)">Show</div>
<div class="t" style="left:594.30px;top:511.65px;font-size:14px;line-height:18px;color:#383838;transform:scaleX(0.9445)">Style</div>
<div class="t" style="left:594.30px;top:542.55px;font-size:14px;line-height:18px;color:#383838;transform:scaleX(1.0221)">Colour</div>
<div class="t" style="left:594.30px;top:573.35px;font-size:14px;line-height:18px;color:#383838;transform:scaleX(1.0886)">Width</div>
<div class="t" style="left:594.30px;top:604.55px;font-size:14px;line-height:18px;color:#383838;transform:scaleX(0.9489)">Ticks</div>
<div class="t" style="left:700.80px;top:542.55px;font-size:14px;line-height:18px;color:#383838;transform:scaleX(1.0034)">Light Gray</div>
<div class="t" style="left:842.29px;top:542.55px;font-size:14px;line-height:18px;color:#383838;transform:scaleX(1.0144)">Light Gray</div>
<div class="t" style="left:676.82px;top:604.55px;font-size:14px;line-height:18px;color:#383838;transform:scaleX(1.0786)">Major &amp; Min...</div>
<div class="t" style="left:812.40px;top:450.79px;font-size:13.6px;line-height:17px;color:#1c1c1c;transform:scaleX(1.0490);font-weight:bold">Minor Grid Lines</div>
<div class="t" style="left:864.00px;top:656.85px;font-size:14px;line-height:18px;color:#1c1c1c;transform:scaleX(0.9143)">OK</div>
<div class="t" style="left:922.90px;top:656.85px;font-size:14px;line-height:18px;color:#1c1c1c;transform:scaleX(0.9524)">Cancel</div>
<!-- window edge shadow -->
<div class="sh" style="left:0;top:0;width:995px;height:10px;background:linear-gradient(to bottom,rgba(0,0,0,.47) 0,rgba(0,0,0,.34) 2px,rgba(0,0,0,.17) 4px,rgba(0,0,0,.07) 6px,rgba(0,0,0,.02) 8px,rgba(0,0,0,0) 10px)"></div>
<div class="sh" style="left:0;bottom:0;width:995px;height:11px;background:linear-gradient(to top,rgba(0,0,0,.60) 0,rgba(0,0,0,.44) 1.5px,rgba(0,0,0,.25) 4px,rgba(0,0,0,.09) 7px,rgba(0,0,0,.02) 9.5px,rgba(0,0,0,0) 11px)"></div>
<div class="sh" style="left:0;top:0;width:11px;height:697px;background:linear-gradient(to right,rgba(0,0,0,.47) 0,rgba(0,0,0,.31) 2px,rgba(0,0,0,.15) 4.5px,rgba(0,0,0,.04) 8px,rgba(0,0,0,0) 11px)"></div>
<div class="sh" style="right:0;top:0;width:10px;height:697px;background:linear-gradient(to left,rgba(0,0,0,.56) 0,rgba(0,0,0,.47) 1px,rgba(0,0,0,.36) 2px,rgba(0,0,0,.21) 3.5px,rgba(0,0,0,.12) 5px,rgba(0,0,0,.03) 7.5px,rgba(0,0,0,0) 10px)"></div>
</body></html>
